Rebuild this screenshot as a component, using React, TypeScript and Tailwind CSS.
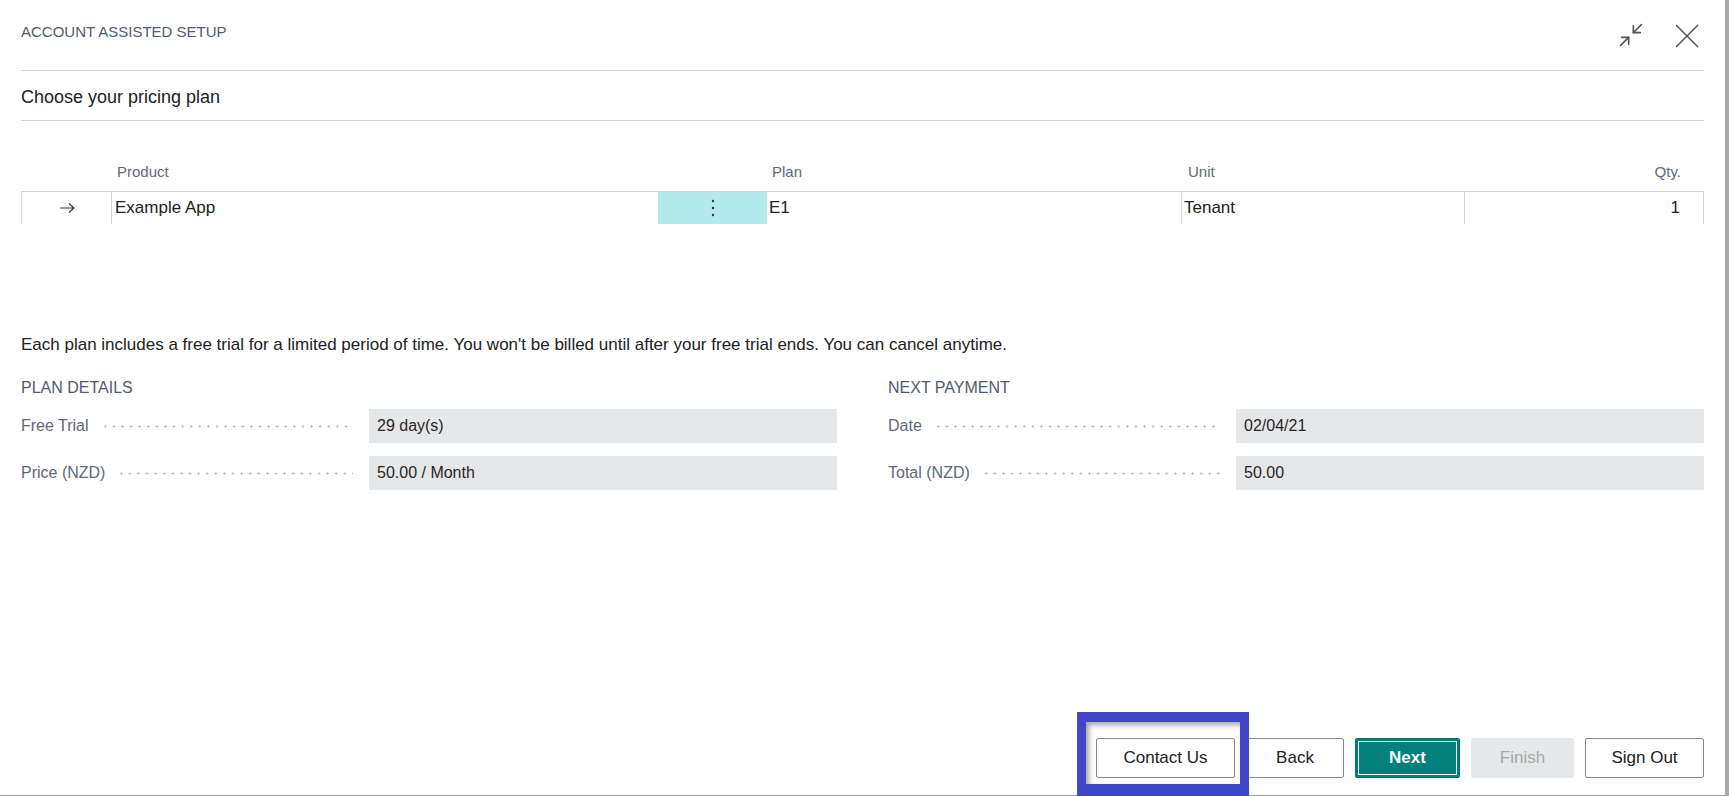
import { Minimize2 } from "lucide-react";

const font = { fontFamily: '"Liberation Sans", Arial, sans-serif' };

const planDetails = [
  { label: "Free Trial", value: "29 day(s)" },
  { label: "Price (NZD)", value: "50.00 / Month" },
];

const nextPayment = [
  { label: "Date", value: "02/04/21" },
  { label: "Total (NZD)", value: "50.00" },
];

const cols = "grid grid-cols-[89px_547px_109px_414px_283px_1fr]";

const FieldRow = ({ label, value }: { label: string; value: string }) => (
  <div className="flex items-center h-[34px]">
    <div className="w-[348px] flex items-center pr-[16px]">
      <span className="text-[16px] text-[#5f6875] whitespace-nowrap">{label}</span>
      <div className="flex-1 ml-[12px] h-[3px] bg-[radial-gradient(circle,#b5b5b5_0.9px,transparent_1.2px)] bg-[length:8.6px_3px] bg-repeat-x" />
    </div>
    <div className="flex-1 h-full bg-[#e6e7e9] flex items-center px-[8px] text-[16px] text-[#262626]">
      {value}
    </div>
  </div>
);

const FieldGroup = ({
  title,
  rows,
}: {
  title: string;
  rows: { label: string; value: string }[];
}) => (
  <div>
    <div className="text-[16px] leading-[22px] text-[#505c6d] uppercase">{title}</div>
    <div className="mt-[10px] flex flex-col gap-[13px]">
      {rows.map((r) => (
        <FieldRow key={r.label} label={r.label} value={r.value} />
      ))}
    </div>
  </div>
);

const Btn = ({ text, className }: { text: string; className: string }) => (
  <button
    className={`h-[40px] rounded-[2px] text-[17px] border flex items-center justify-center ${className}`}
  >
    {text}
  </button>
);

const App = () => {
  return (
    <div className="w-[1729px] h-[796px] flex bg-white overflow-hidden" style={font}>
      <div className="flex-1 flex flex-col px-[21px] border-b border-[#9e9e9e]">
        {/* header */}
        <div className="h-[71px] flex items-start justify-between pt-[22px] border-b border-[#d4d4d4] shrink-0">
          <div className="text-[15px] leading-[20px] text-[#505c6d] uppercase">
            Account Assisted Setup
          </div>
          <div className="flex items-start gap-[30px] mr-[5px]">
            <Minimize2 size={28} strokeWidth={1.4} className="text-[#555] -mt-[1px]" />
            <svg width="24" height="24" viewBox="0 0 24 24" className="mt-[2px]">
              <path d="M1 1 L23 23 M23 1 L1 23" stroke="#555" strokeWidth="1.5" fill="none" />
            </svg>
          </div>
        </div>

        <div className="h-[50px] flex items-center pt-[3px] border-b border-[#d4d4d4] shrink-0">
          <span className="text-[18px] text-[#212121]">Choose your pricing plan</span>
        </div>

        {/* table */}
        <div className="mt-[41px]">
          <div className={`${cols} h-[29px] text-[15px] leading-[20px] text-[#5f6875]`}>
            <div />
            <div className="pl-[7px]">Product</div>
            <div />
            <div className="pl-[6px]">Plan</div>
            <div className="pl-[8px]">Unit</div>
            <div className="text-right pr-[23px]">Qty.</div>
          </div>
          <div
            className={`${cols} h-[33px] border-t border-l border-r border-[#d4d4d4] text-[17px] text-[#212121]`}
          >
            <div className="flex items-center justify-center">
              <svg width="16" height="12" viewBox="0 0 16 12">
                <path
                  d="M1 6 H15 M10 1.5 L15 6 L10 10.5"
                  stroke="#333"
                  strokeWidth="1.1"
                  fill="none"
                />
              </svg>
            </div>
            <div className="border-l border-[#d4d4d4] pl-[3px] flex items-center">Example App</div>
            <div className="bg-[#b4e9ed] flex items-center justify-center">
              <svg width="4" height="20" viewBox="0 0 4 20">
                <circle cx="2" cy="3" r="1.2" fill="#333" />
                <circle cx="2" cy="10" r="1.2" fill="#333" />
                <circle cx="2" cy="17" r="1.2" fill="#333" />
              </svg>
            </div>
            <div className="pl-[2px] flex items-center">E1</div>
            <div className="border-l border-[#d4d4d4] pl-[2px] flex items-center">Tenant</div>
            <div className="border-l border-[#d4d4d4] pr-[23px] flex items-center justify-end">1</div>
          </div>
        </div>

        <p className="mt-[109px] text-[17px] leading-[24px] text-[#212121]">
          Each plan includes a free trial for a limited period of time. You won't be billed until
          after your free trial ends. You can cancel anytime.
        </p>

        <div className="mt-[20px] grid grid-cols-2 gap-[51px]">
          <FieldGroup title="Plan Details" rows={planDetails} />
          <FieldGroup title="Next Payment" rows={nextPayment} />
        </div>

        <div className="flex-1" />

        {/* footer buttons */}
        <div className="flex justify-end gap-[11px] pb-[17px]">
          <div className="relative">
            <Btn text="Contact Us" className="w-[139px] border-[#8a8a8a] text-[#212121] bg-white" />
            <div className="absolute left-[-19px] top-[-26px] w-[172px] h-[86px] border-[#4046c8] border-l-[9px] border-r-[9px] border-t-[10px] border-b-[14px] shadow-[inset_3px_3px_5px_rgba(0,0,0,0.35)] pointer-events-none" />
          </div>
          <Btn text="Back" className="w-[98px] border-[#8a8a8a] text-[#212121] bg-white" />
          <Btn
            text="Next"
            className="w-[105px] border-[#006d6a] bg-[#00817e] text-white font-bold shadow-[inset_0_0_0_2px_#00817e,inset_0_0_0_3px_#ffffff]"
          />
          <Btn text="Finish" className="w-[103px] border-[#e6e7e9] bg-[#e6e7e9] text-[#a8a8a8]" />
          <Btn text="Sign Out" className="w-[119px] border-[#8a8a8a] text-[#212121] bg-white" />
        </div>
      </div>
      <div className="w-[4px] bg-[#a9a9a9]" />
    </div>
  );
};

export default App;
